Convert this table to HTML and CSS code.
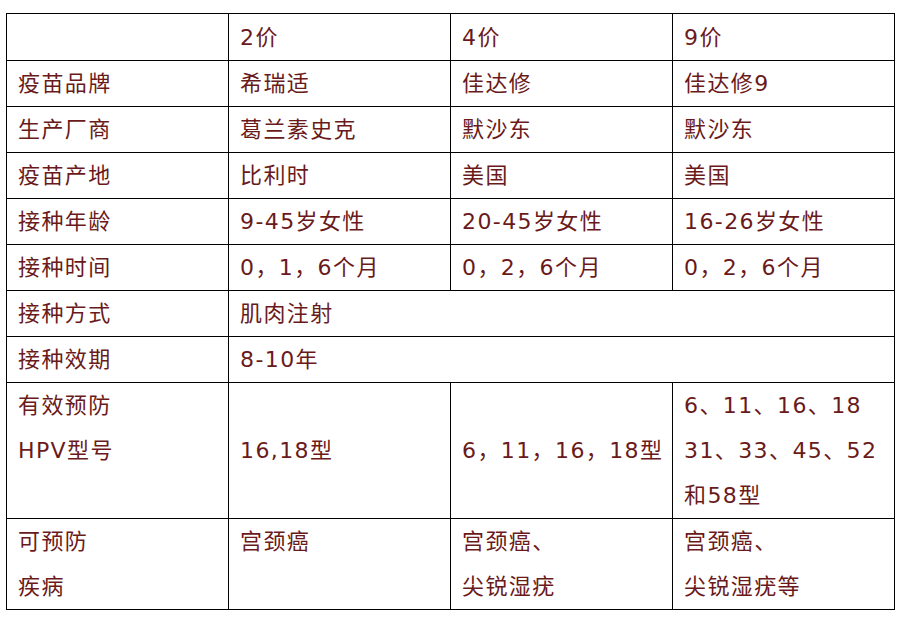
FILE: index.html
```html
<!DOCTYPE html>
<html lang="zh-CN">
<head>
<meta charset="utf-8">
<title>HPV疫苗对比</title>
<link rel="stylesheet" href="styles.css">
</head>
<body>
<table class="hpv">
  <colgroup>
    <col class="c"><col class="c"><col class="c"><col class="c">
  </colgroup>
  <tr><td></td><td>2价</td><td>4价</td><td>9价</td></tr>
  <tr><td>疫苗品牌</td><td>希瑞适</td><td>佳达修</td><td>佳达修9</td></tr>
  <tr><td>生产厂商</td><td>葛兰素史克</td><td>默沙东</td><td>默沙东</td></tr>
  <tr><td>疫苗产地</td><td>比利时</td><td>美国</td><td>美国</td></tr>
  <tr><td>接种年龄</td><td>9-45岁女性</td><td>20-45岁女性</td><td>16-26岁女性</td></tr>
  <tr><td>接种时间</td><td>0，1，6个月</td><td>0，2，6个月</td><td>0，2，6个月</td></tr>
  <tr><td>接种方式</td><td colspan="3">肌肉注射</td></tr>
  <tr><td>接种效期</td><td colspan="3">8-10年</td></tr>
  <tr class="mid"><td>有效预防<br>HPV型号<br>&nbsp;</td><td>16,18型</td><td>6，11，16，18型</td><td>6、11、16、18<br>31、33、45、52<br>和58型</td></tr>
  <tr class="top"><td>可预防<br>疾病</td><td>宫颈癌</td><td>宫颈癌、<br>尖锐湿疣</td><td>宫颈癌、<br>尖锐湿疣等</td></tr>
</table>
</body>
</html>
```
FILE: styles.css
```css
html, body {
  margin: 0;
  padding: 0;
  background: #ffffff;
}
body {
  padding: 13px 0 0 6px;
}
.hpv {
  border-collapse: collapse;
  table-layout: fixed;
  width: 888px;
  font-family: "DejaVu Sans", "Noto Sans CJK SC", sans-serif;
  font-size: 22px;
  letter-spacing: 1.4px;
  color: #6a1a1a;
}
.hpv .c {
  width: 222px;
}
.hpv td {
  border: 1px solid #000000;
  padding: 0 0 0 11px;
  height: 45px;
  line-height: 45px;
  vertical-align: middle;
  white-space: nowrap;
}
.hpv tr:first-child td {
  height: 46px;
}
.hpv tr.top td {
  vertical-align: top;
}
```
